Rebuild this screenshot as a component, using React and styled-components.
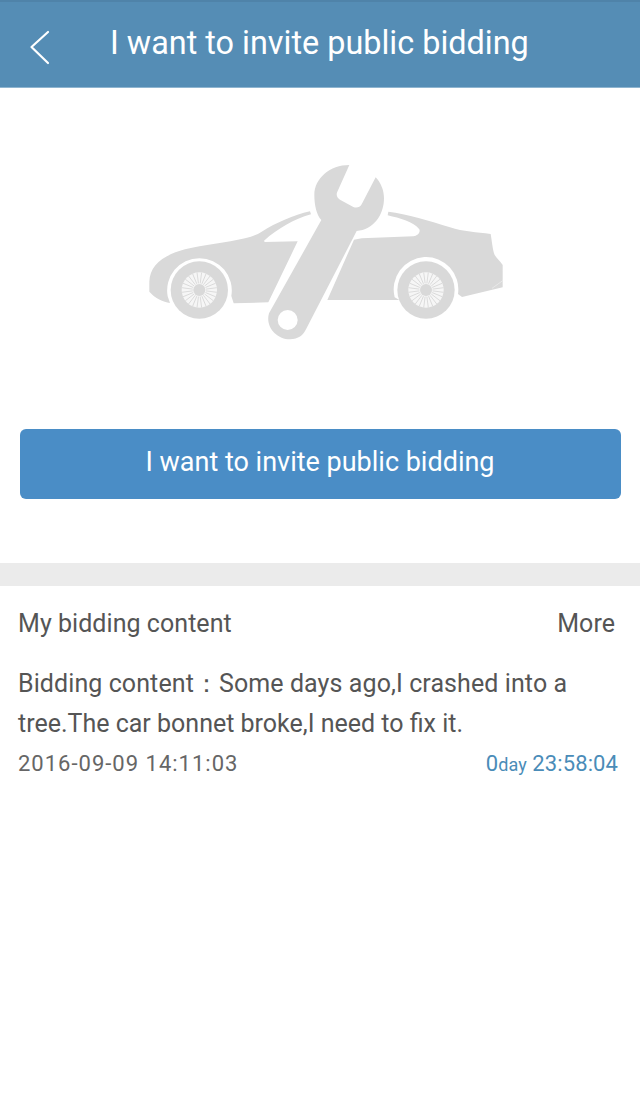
import React from "react";
import styled, { createGlobalStyle } from "styled-components";

const Global = createGlobalStyle`
  html, body { margin: 0; padding: 0; background: #fff; }
  body { font-family: Roboto, "Liberation Sans", sans-serif; }
`;
const Page = styled.div`
  width: 640px; height: 1096px; background: #fff; overflow: hidden;
  display: flex; flex-direction: column;
`;
const Header = styled.header`
  height: 88px; box-sizing: border-box; flex: none;
  background: #558db5;
  border-top: 2px solid #4f83a9;
  border-bottom: 1px solid #8fb5d0;
  display: flex; align-items: center;
  padding: 0 0 4px 29px;
`;
const Back = styled.svg`
  width: 22px; height: 36px; flex: none; margin-top: 9px;
`;
const Title = styled.h1`
  margin: 0 0 0 59px; font-size: 32.4px; font-weight: 400; color: #fff; white-space: nowrap;
`;
const Hero = styled.div`
  height: 341px; flex: none; display: flex; justify-content: center; align-items: flex-start;
  padding-top: 62px; box-sizing: border-box;
`;
const Illustration = styled.svg`
  width: 390px; height: 200px; margin-left: 10px;
`;
const ActionWrap = styled.div`
  padding: 0 19.5px; height: 134px; flex: none; box-sizing: border-box;
`;
const Action = styled.button`
  width: 100%; height: 70px; border: 0; border-radius: 6px; background: #4a8dc6;
  color: #fff; font: 400 27px Roboto, sans-serif; padding: 0 0 4px; display: block;
`;
const Divider = styled.div`
  height: 23px; flex: none; background: #ebebeb;
`;
const Section = styled.section`
  padding: 0 22px 0 18px; color: #555;
`;
const SectionHead = styled.div`
  display: flex; justify-content: space-between; align-items: center;
  height: 74px; font-size: 25px; padding-right: 3px; letter-spacing: 0.05px;
`;
const Body = styled.p`
  margin: 4px 0 0; font-size: 25px; line-height: 40px; color: #555;
  &::first-line { letter-spacing: 0.09px; }
`;
const Meta = styled.div`
  display: flex; justify-content: space-between; align-items: baseline;
  font-size: 22px; line-height: 40px; letter-spacing: 1px; color: #666;
`;
const Countdown = styled.span`
  color: #4a8cb8; letter-spacing: 0.1px;
`;
const Unit = styled.span`
  font-size: 18px;
`;

const spokes = Array.from({ length: 24 }, (_, i) => (i * 360) / 24);

function Wheel({ cx }) {
  return (
    <g>
      <circle cx={cx} cy="420" r="86" fill="#d9d9d9" />
      <circle cx={cx} cy="420" r="53" fill="#f6f6f6" />
      {spokes.map((a) => (
        <line key={a} x1={cx} y1="400" x2={cx} y2="367" stroke="#d9d9d9" strokeWidth="2.6"
          transform={`rotate(${a + 7.5} ${cx} 420)`} />
      ))}
      <circle cx={cx} cy="420" r="18" fill="#d9d9d9" />
    </g>
  );
}

export default function App() {
  return (
    <Page>
      <Global />
      <Header>
        <Back viewBox="0 0 22 36">
          <path d="M19 3 L2.5 18 L19 34" fill="none" stroke="#fff" strokeWidth="2.2" strokeLinecap="round" strokeLinejoin="round" />
        </Back>
        <Title>I want to invite public bidding</Title>
      </Header>
      <Hero>
        <Illustration viewBox="0 0 1170 600">
          <g fill="#d9d9d9">
            <path d="M58 395 C60 345 100 315 165 298 C220 285 290 278 345 265 C365 260 380 255 395 245 C440 218 490 195 540 184 L543 193 C490 208 445 235 402 272 L404 276 L503 274 L415 457 L311 460 L304 438 A97 97 0 1 0 113 439 L120 459 C100 455 75 445 58 425 Z" />
            <path d="M775 185 C830 192 900 212 960 232 C1000 245 1040 247 1082 252 C1086 275 1088 300 1094 315 C1100 325 1112 335 1118 345 L1118 412 L996 441 L984 432 A97 97 0 1 0 794 442 L808 450 L592 450 L672 269 L695 265 L850 259 C862 258 872 248 868 238 C850 215 810 205 773 196 Z" />
            <path d="M658 45 C600 45 553 85 553 135 C553 165 560 195 574 210 L417 490 C405 530 440 568 480 568 C505 568 520 555 528 538 L680 243 C730 240 762 195 762 145 C762 120 752 98 737 82 L695 163 C690 172 680 175 670 171 L630 149 C620 143 618 133 622 125 Z" />
          </g>
          <circle cx="473" cy="510" r="30" fill="#fff" />
          <Wheel cx={208} />
          <Wheel cx={888} />
          <line x1="1086" y1="415" x2="1118" y2="392" stroke="#fff" strokeWidth="2" opacity="0.6" />
        </Illustration>
      </Hero>
      <ActionWrap>
        <Action>I want to invite public bidding</Action>
      </ActionWrap>
      <Divider />
      <Section>
        <SectionHead>
          <span>My bidding content</span>
          <span>More</span>
        </SectionHead>
        <Body>Bidding content：Some days ago,I crashed into a tree.The car bonnet broke,I need to fix it.</Body>
        <Meta>
          <span>2016-09-09 14:11:03</span>
          <Countdown>0<Unit>day</Unit> 23:58:04</Countdown>
        </Meta>
      </Section>
    </Page>
  );
}
